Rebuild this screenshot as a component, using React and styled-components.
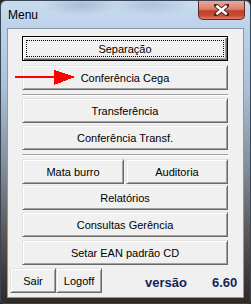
import React from "react";
import styled, { createGlobalStyle, css } from "styled-components";

const GlobalStyle = createGlobalStyle`
  html, body { margin: 0; padding: 0; background: #2b2622; }
  * { box-sizing: border-box; }
`;

const Window = styled.div`
  width: 251px;
  height: 304px;
  border: 1px solid #3a4656;
  border-radius: 6px 6px 4px 4px;
  display: flex;
  flex-direction: column;
  overflow: hidden;
  background:
    radial-gradient(ellipse 40px 10px at 80px 4px, rgba(140,165,195,0.55), transparent),
    radial-gradient(ellipse 40px 10px at 150px 4px, rgba(140,165,195,0.45), transparent),
    linear-gradient(180deg, #c9dcef 0px, #bcd2ea 28px, #a9bfd6 90px, #7f8a96 170px, #56524f 240px, #2f2926 303px);
`;

const TitleBar = styled.div`
  height: 27px;
  display: flex;
  align-items: flex-start;
  justify-content: space-between;
  padding-left: 7px;
`;

const Title = styled.span`
  margin-top: 7px;
  font-family: "Liberation Sans", Arial, sans-serif;
  font-size: 12px;
  line-height: 14px;
  color: #000;
`;

const CloseButton = styled.div`
  width: 47px;
  height: 19px;
  margin-right: 5px;
  border: 1px solid #5e2a22;
  border-top: none;
  border-radius: 0 0 5px 5px;
  background: linear-gradient(180deg, #e9a99c 0%, #dc7f6c 45%, #c2402a 55%, #c94a33 80%, #de7a63 100%);
  display: flex;
  align-items: center;
  justify-content: center;
`;

const Client = styled.div`
  margin: 0 6px;
  height: 270px;
  border: 1px solid #8a98ab;
  background: #f0f0f0;
  position: relative;
  display: flex;
  flex-direction: column;
`;

const ButtonColumn = styled.div`
  display: flex;
  flex-direction: column;
  align-items: flex-start;
  padding: 7px 0 0 14px;
`;

const buttonBase = css`
  height: 25px;
  padding: 0;
  margin: 0;
  background: #f0f0f0;
  font-family: "Liberation Sans", Arial, sans-serif;
  font-size: 11px;
  color: #000;
  display: flex;
  align-items: center;
  justify-content: center;
  cursor: default;
`;

const Button = styled.button`
  ${buttonBase};
  width: ${(p) => p.$w || 206}px;
  margin-top: ${(p) => p.$mt || 0}px;
  margin-left: ${(p) => p.$ml || 0}px;
  border: 1px solid;
  border-color: #e3e3e3 #696969 #696969 #e3e3e3;
  box-shadow: inset 1px 1px #ffffff, inset -1px -1px #a0a0a0;
  ${(p) =>
    p.$default &&
    css`
      border: 1px solid #000;
      box-shadow: inset 1px 1px #ffffff, inset -1px -1px #696969, inset -2px -2px #a0a0a0;
      outline: 1px dotted #000;
      outline-offset: -5px;
    `}
`;

const Separator = styled.div`
  width: 206px;
  height: 2px;
  margin-top: ${(p) => p.$mt}px;
  border-top: 1px solid #a0a0a0;
  border-bottom: 1px solid #ffffff;
`;

const Row = styled.div`
  display: flex;
  margin-top: ${(p) => p.$mt || 0}px;
  gap: 2px;
`;

const Footer = styled.div`
  display: flex;
  align-items: flex-start;
  padding: 0 4px 0 2px;
  margin-top: 3px;
`;

const VersionText = styled.span`
  font-family: "Liberation Sans", Arial, sans-serif;
  font-weight: bold;
  font-size: 13px;
  line-height: 15px;
  color: #16245a;
  margin-top: 7px;
  margin-left: ${(p) => p.$ml}px;
`;

const Arrow = styled.svg`
  position: absolute;
  left: 7px;
  top: 40px;
`;

export default function App() {
  return (
    <>
      <GlobalStyle />
      <Window>
        <TitleBar>
          <Title>Menu</Title>
          <CloseButton>
            <svg width="15" height="12" viewBox="0 0 15 12">
              <path d="M2 1.5 L13 10.5 M13 1.5 L2 10.5" stroke="#4b2018" strokeWidth="4.2" strokeLinecap="square" />
              <path d="M2.3 1.8 L12.7 10.2 M12.7 1.8 L2.3 10.2" stroke="#ffffff" strokeWidth="2.4" strokeLinecap="butt" />
            </svg>
          </CloseButton>
        </TitleBar>
        <Client>
          <ButtonColumn>
            <Button $default>Separação</Button>
            <Button $mt={4}>Conferência Cega</Button>
            <Separator $mt={4} />
            <Button $mt={2}>Transferência</Button>
            <Button $mt={2}>Conferência Transf.</Button>
            <Separator $mt={4} />
            <Row $mt={3}>
              <Button $w={102}>Mata burro</Button>
              <Button $w={102}>Auditoria</Button>
            </Row>
            <Button $mt={1}>Relatórios</Button>
            <Button $mt={2}>Consultas Gerência</Button>
            <Button $mt={3}>Setar EAN padrão CD</Button>
          </ButtonColumn>
          <Footer>
            <Button $w={46}>Sair</Button>
            <Button $w={46} $ml={0}>Logoff</Button>
            <VersionText $ml={43}>versão</VersionText>
            <VersionText $ml={25}>6.60</VersionText>
          </Footer>
          <Arrow width="61" height="17" viewBox="0 0 61 17" shapeRendering="crispEdges">
            <rect x="0" y="7" width="41" height="2" fill="#ff0000" />
            <polygon points="39,1 60,8 39,16" fill="#ff0000" />
          </Arrow>
        </Client>
      </Window>
    </>
  );
}
